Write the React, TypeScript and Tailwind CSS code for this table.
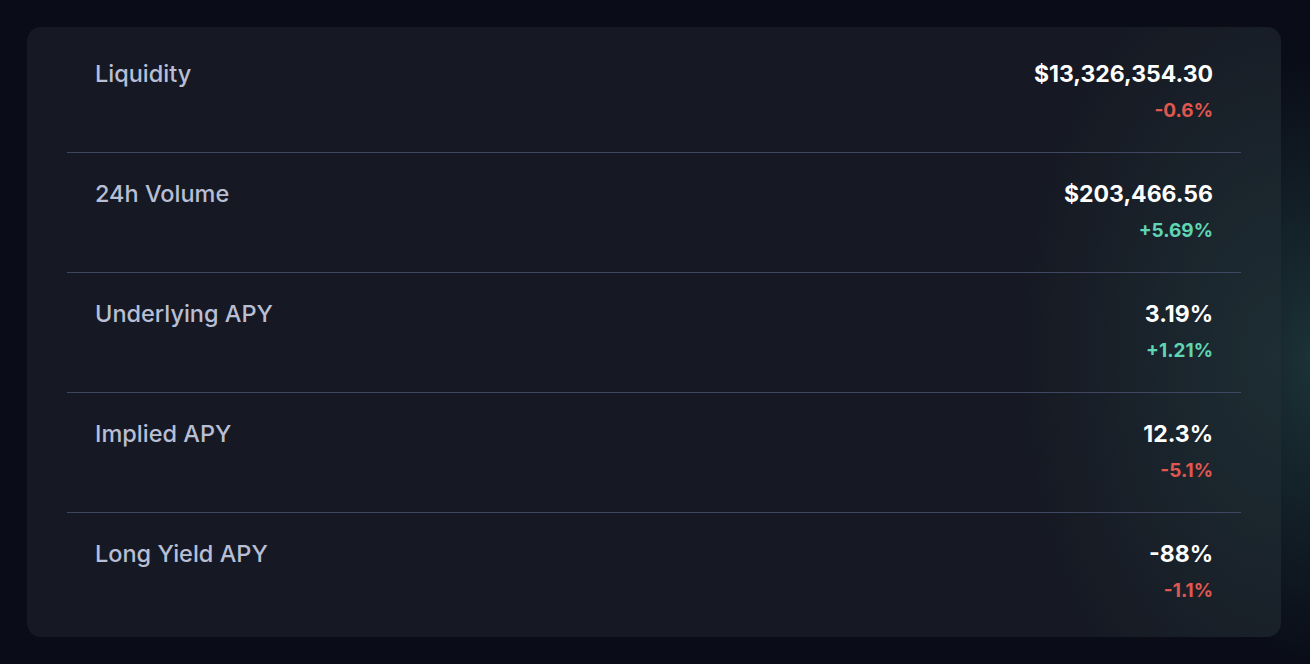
import React from "react";

interface Stat {
  label: string;
  value: string;
  change: string;
  up: boolean;
}

const stats: Stat[] = [
  { label: "Liquidity", value: "$13,326,354.30", change: "-0.6%", up: false },
  { label: "24h Volume", value: "$203,466.56", change: "+5.69%", up: true },
  { label: "Underlying APY", value: "3.19%", change: "+1.21%", up: true },
  { label: "Implied APY", value: "12.3%", change: "-5.1%", up: false },
  { label: "Long Yield APY", value: "-88%", change: "-1.1%", up: false },
];

const StatRow: React.FC<{ stat: Stat; last: boolean }> = ({ stat, last }) => (
  <div
    className={[
      "flex justify-between px-7 pt-[26px] h-[120px]",
      last ? "" : "border-b border-[#3f4860]",
    ].join(" ")}
  >
    <span className="text-[23.5px] leading-[30px] font-medium text-[#b8bed4]">{stat.label}</span>
    <div className="flex flex-col items-end">
      <span className="text-[23px] leading-[30px] font-bold text-white">{stat.value}</span>
      <span
        className={[
          "mt-[10px] text-[19px] leading-[24px] font-bold",
          stat.up ? "text-[#5fd6b3]" : "text-[#e0574f]",
        ].join(" ")}
      >
        {stat.change}
      </span>
    </div>
  </div>
);

export default function App() {
  return (
    <div className="relative w-[1310px] h-[664px] overflow-hidden bg-[#0a0d18] font-['Inter',sans-serif] pt-[27px] px-[27px]">
      <div className="pointer-events-none absolute inset-0 bg-[radial-gradient(ellipse_140px_300px_at_1310px_360px,rgba(60,120,110,0.35),transparent)]" />
      <div className="relative w-[1254px] h-[610px] rounded-[14px] bg-[#161923] overflow-hidden">
        <div className="pointer-events-none absolute inset-0 bg-[radial-gradient(ellipse_260px_420px_at_1254px_330px,rgba(50,100,95,0.28),transparent)]" />
        <div className="relative px-10 pt-[6px]">
          {stats.map((s, i) => (
            <StatRow key={s.label} stat={s} last={i === stats.length - 1} />
          ))}
        </div>
      </div>
    </div>
  );
}
